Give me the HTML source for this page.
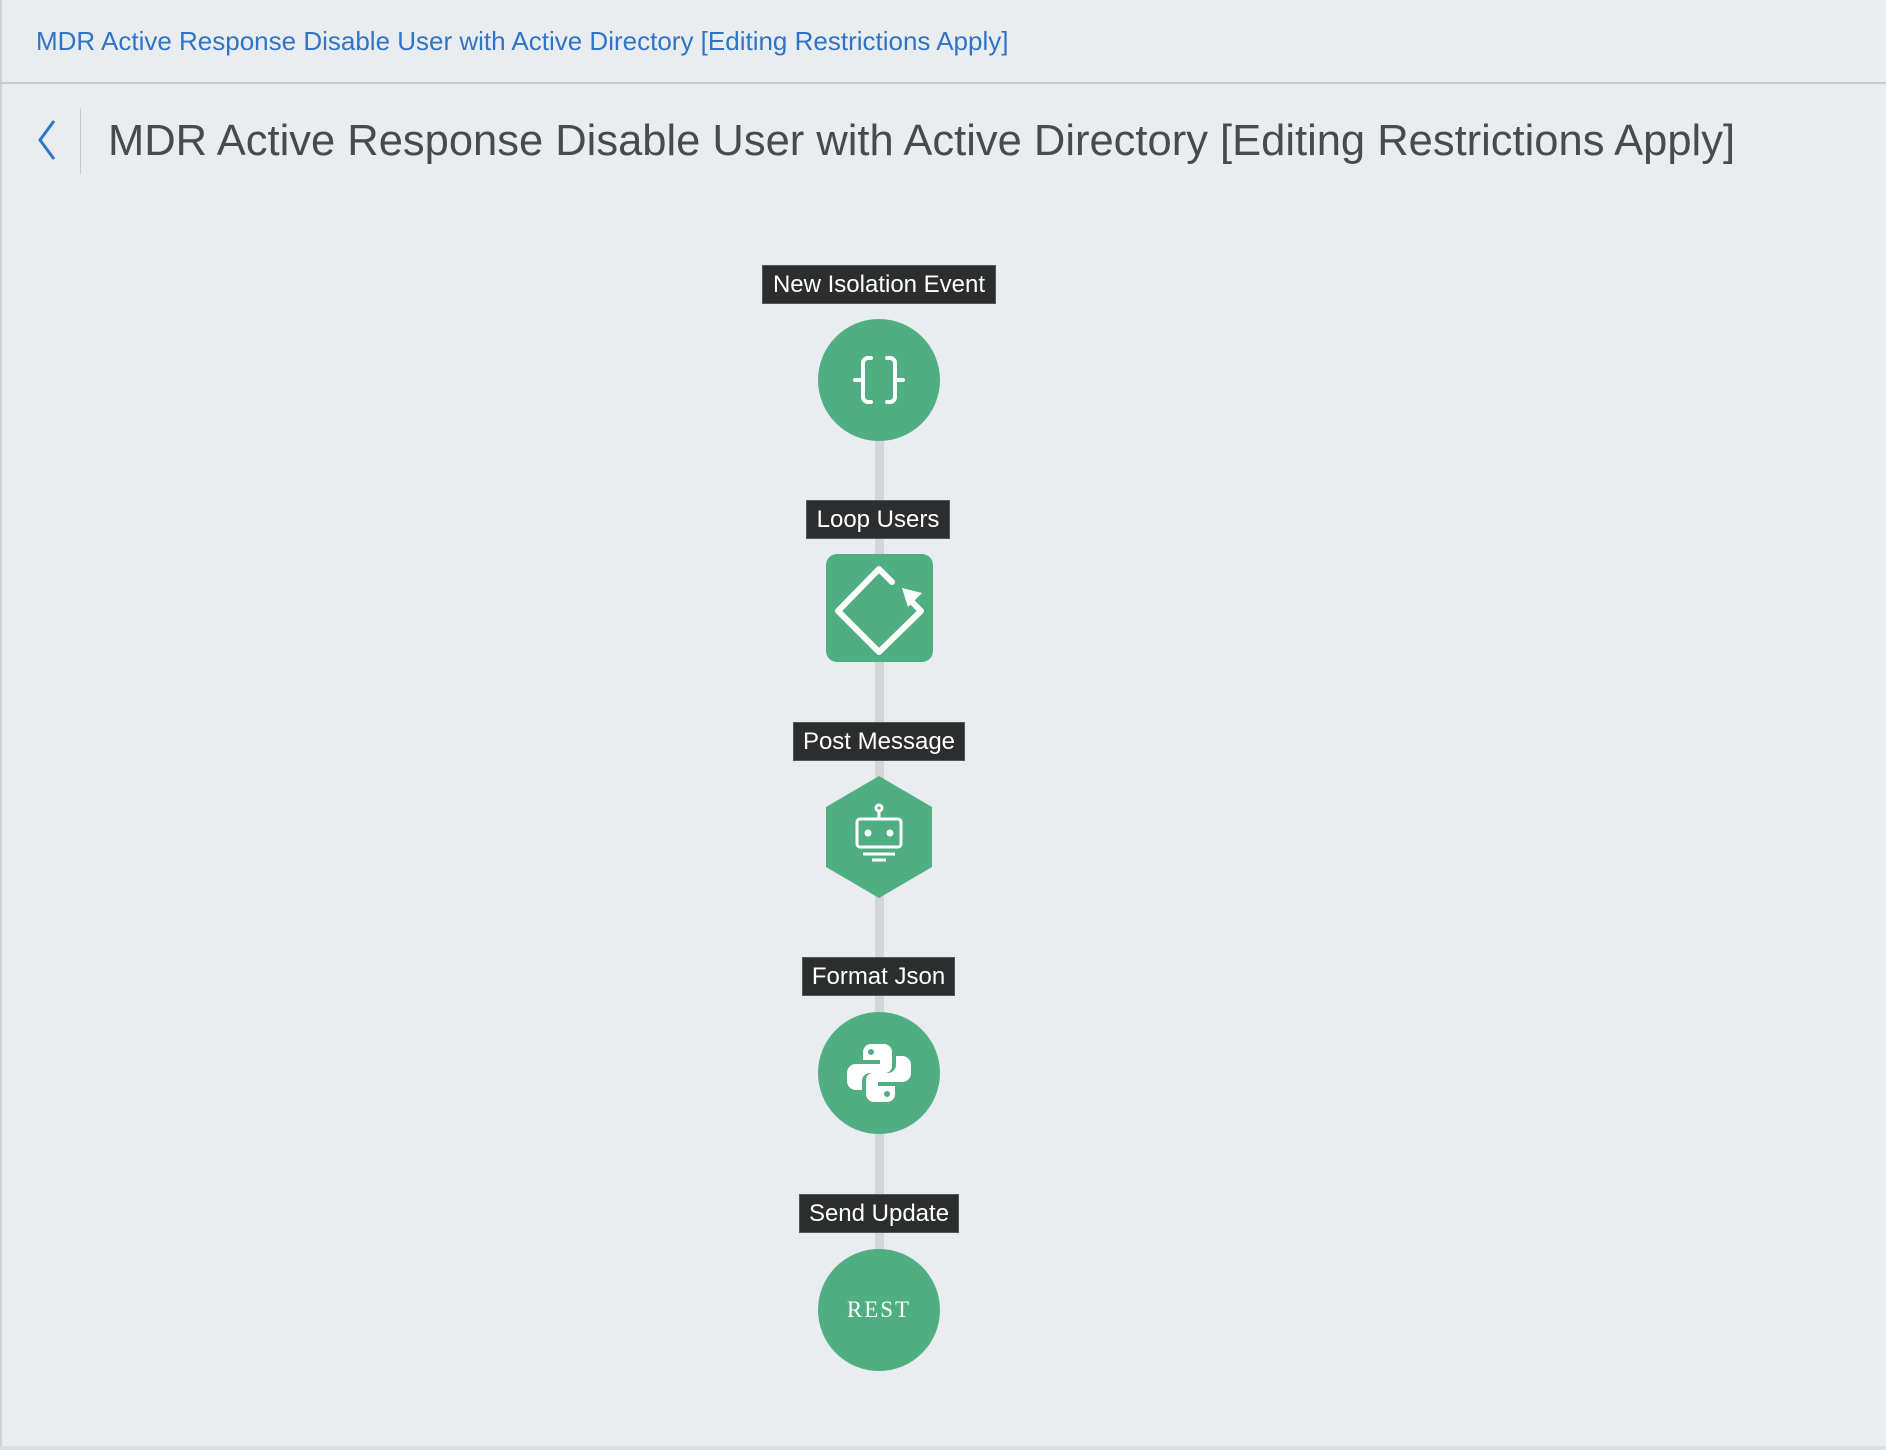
<!DOCTYPE html>
<html><head><meta charset="utf-8"><style>
html,body{margin:0;padding:0;}
body{width:1886px;height:1450px;background:#e9edf0;position:relative;overflow:hidden;font-family:"Liberation Sans",Arial,sans-serif;}
.lb{position:absolute;left:0;top:0;width:2px;height:1447px;background:#cfd3d7;}
.bb{position:absolute;left:0;top:1446px;width:1886px;height:4px;background:#dcdfe2;}
.hdr{position:absolute;left:0;top:82px;width:1886px;height:2px;background:#c9cccf;}
.crumb{position:absolute;left:36px;top:26px;font-size:26px;color:#2f74c7;white-space:nowrap;}
.title{position:absolute;left:108px;top:114px;font-size:43.5px;color:#4a4a4a;white-space:nowrap;line-height:54px;}
.vd{position:absolute;left:80px;top:108px;width:1px;height:66px;background:#c9cccf;}
.line{position:absolute;left:875px;top:440px;width:9px;height:812px;background:#d3d6d9;}
.lbl{position:absolute;background:#2c2d2d;border:1px solid #555;color:#fff;font-size:24px;line-height:37px;text-align:center;box-sizing:border-box;height:39px;white-space:nowrap;}
.circ{position:absolute;width:122px;height:122px;border-radius:50%;background:#4faf83;}
svg{position:absolute;}
.rest{position:absolute;left:818px;top:1249px;width:122px;height:122px;line-height:122px;text-align:center;color:#fff;font-family:"Liberation Serif",serif;font-size:23px;letter-spacing:2px;}
</style></head><body>
<div class="lb"></div><div class="bb"></div>
<div class="crumb">MDR Active Response Disable User with Active Directory [Editing Restrictions Apply]</div>
<div class="hdr"></div>
<svg style="left:30px;top:115px" width="30" height="50"><path d="M24 6 L10 25 L24 44" fill="none" stroke="#2f74c7" stroke-width="3"/></svg>
<div class="vd"></div>
<div class="title">MDR Active Response Disable User with Active Directory [Editing Restrictions Apply]</div>

<div class="line"></div>

<div class="lbl" style="left:762px;top:265px;width:234px">New Isolation Event</div>
<div class="circ" style="left:818px;top:319px"></div>
<svg style="left:818px;top:319px" width="122" height="122"><g fill="none" stroke="#fff" stroke-width="4" stroke-linecap="round"><path d="M53 39 h-3 a5 5 0 0 0 -5 5 v17 h-8 M45 61 v17 a5 5 0 0 0 5 5 h3"/><path d="M69 39 h3 a5 5 0 0 1 5 5 v17 h8 M77 61 v17 a5 5 0 0 1 -5 5 h-3"/></g></svg>

<div class="lbl" style="left:806px;top:500px;width:144px">Loop Users</div>
<svg style="left:826px;top:554px" width="107" height="108"><rect x="0" y="0" width="107" height="108" rx="11" fill="#4faf83"/><g fill="none" stroke="#fff" stroke-width="6" stroke-linecap="round" stroke-linejoin="round"><path d="M66 28 L53 15 L12 57 L53 98 L95 57 L82 44"/></g><path d="M76 34 L96 39 L82 53 Z" fill="#fff"/></svg>

<div class="lbl" style="left:793px;top:722px;width:172px">Post Message</div>
<svg style="left:825px;top:776px" width="108" height="122"><polygon points="54,0 107,31 107,91 54,122 1,91 1,31" fill="#4faf83"/><g fill="none" stroke="#fff" stroke-width="3"><rect x="32" y="43" width="44" height="28" rx="3"/><line x1="54" y1="43" x2="54" y2="35"/><circle cx="54" cy="32" r="3"/><line x1="38" y1="78" x2="70" y2="78"/><line x1="47" y1="84" x2="61" y2="84"/></g><circle cx="43" cy="57" r="3.5" fill="#fff"/><circle cx="65" cy="57" r="3.5" fill="#fff"/></svg>

<div class="lbl" style="left:802px;top:957px;width:153px">Format Json</div>
<div class="circ" style="left:818px;top:1012px"></div>
<svg style="left:818px;top:1012px" width="122" height="122"><g fill="#fff"><path d="M59 32 h-6 a8 8 0 0 0 -8 8 v8 h17 v4 h-24 a9 9 0 0 0 -9 9 v8 a9 9 0 0 0 9 9 h6 v-9 a8 8 0 0 1 8 -8 h15 a7 7 0 0 0 7 -7 v-14 a8 8 0 0 0 -8 -8 z"/><path d="M63 90 h6 a8 8 0 0 0 8 -8 v-8 h-17 v-4 h24 a9 9 0 0 0 9 -9 v-8 a9 9 0 0 0 -9 -9 h-6 v9 a8 8 0 0 1 -8 8 h-15 a7 7 0 0 0 -7 7 v14 a8 8 0 0 0 8 8 z"/></g><circle cx="53" cy="40" r="3" fill="#4faf83"/><circle cx="69" cy="82" r="3" fill="#4faf83"/></svg>

<div class="lbl" style="left:799px;top:1194px;width:160px">Send Update</div>
<div class="circ" style="left:818px;top:1249px"></div>
<div class="rest">REST</div>
</body></html>
